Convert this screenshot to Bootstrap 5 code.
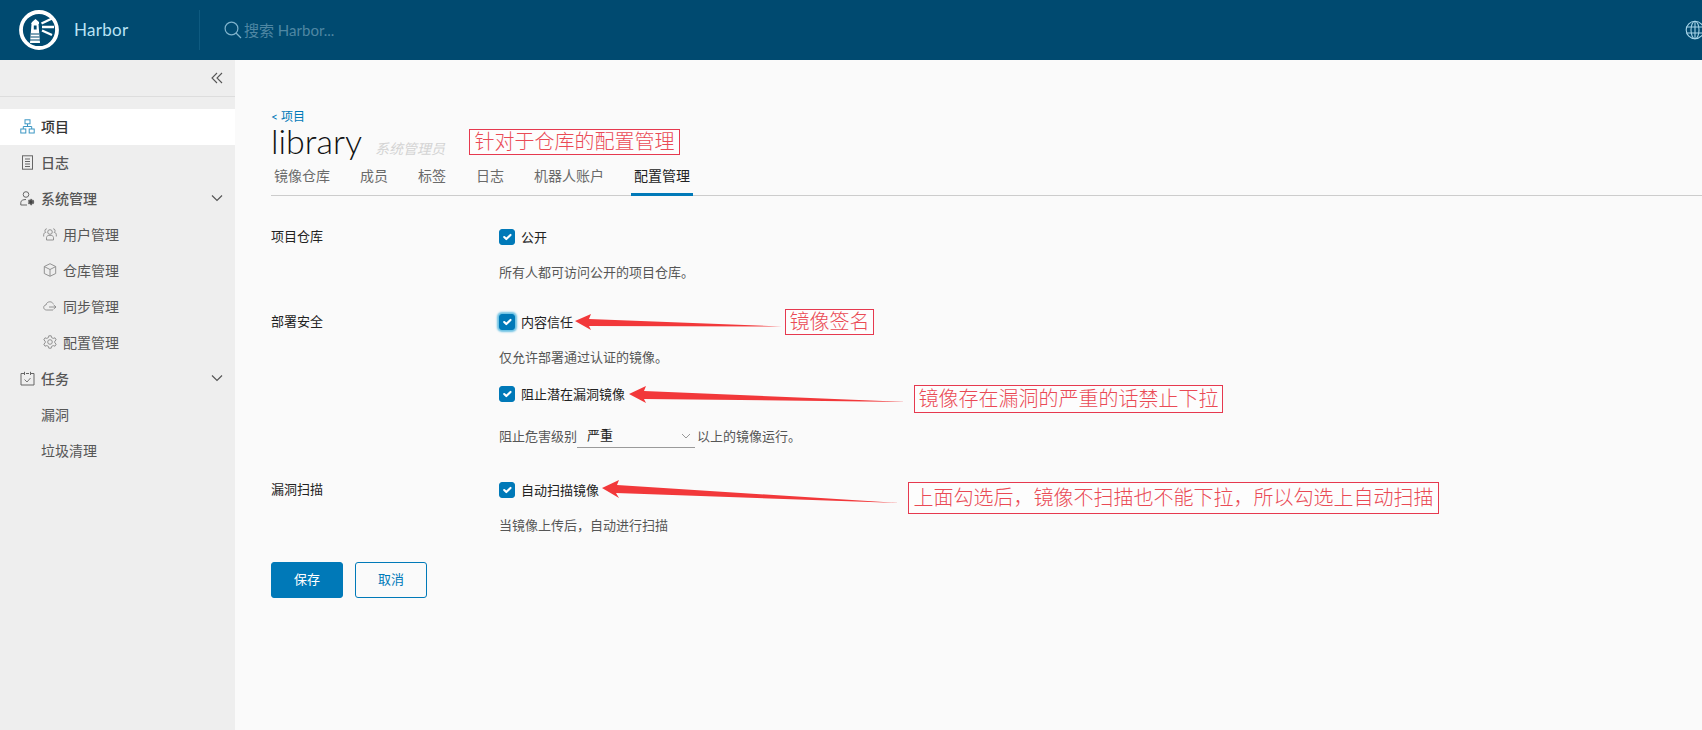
<!DOCTYPE html>
<html lang="zh-CN">
<head>
<meta charset="utf-8">
<title>Harbor</title>
<link href="https://cdn.jsdelivr.net/npm/bootstrap@5.3.0/dist/css/bootstrap.min.css" rel="stylesheet">
<style>
html,body{height:730px;overflow:hidden}
body{font-family:"Lato","Noto Sans CJK SC",sans-serif;font-size:14px;background:#fafafa;color:#222;position:relative}
.hb-top{height:60px;background:#004a70;color:#b9e3f5}
.hb-logo{margin-left:19px;width:40px;height:40px}
.hb-name{margin-left:15px;font-size:17px;letter-spacing:.3px;width:125px}
.hb-div{width:1px;height:40px;background:#0e5a80}
.hb-search{color:#4f87a3;font-size:15px;margin-left:2px}
.hb-mag{margin-left:24px}
.hb-glob{position:absolute;right:-3px;top:20px}
.hb-body{height:670px}
.hb-side{width:235px;background:#eee;color:#565656;flex:none}
.hb-coll{height:37px;border-bottom:1px solid #ddd;margin-bottom:12px;padding-right:12px}
.hb-item{height:36px;padding:0 12px 2px 20px;color:#565656;font-weight:500}
.hb-item.hb-on{background:#fff;color:#333}
.hb-sub{padding-left:43px;font-weight:400}
.hb-plain{padding-left:41px;font-weight:400}
.hb-ico{width:15px;margin-right:6px;flex:none}
.hb-sub .hb-ico{width:14px;margin-right:6px}
.hb-main{padding:48px 0 0 36px;min-width:0}
.hb-crumb{font-size:12px;line-height:18px;color:#0079b8}
.hb-crumb:hover{color:#0079b8}
.hb-title{font-size:34px;line-height:29px;font-weight:300;color:#111;margin:0;height:35px}
.hb-role{font-size:14px;font-style:italic;color:#d4d4d4;margin-left:13px;font-weight:400}
.hb-tabs{border-bottom:1px solid #ccc;height:35px}
.hb-tabs .nav-link{padding:0 3px;margin-right:24px;height:35px;line-height:30px;color:#6a6a6a;font-size:14px;border-bottom:3px solid transparent}
.hb-tabs .nav-link.active{color:#222;border-bottom-color:#0079b8}
.hb-form{padding-top:29px}
.hb-lbl{width:228px;flex:none;line-height:22px;color:#222;font-size:13px}
.hb-line{height:24px;line-height:24px;display:flex;align-items:center;font-size:13px}
.hb-help{color:#565656;font-size:13px;line-height:24px;margin-top:11px}
.hb-line .form-check-input{width:16px;height:16px;margin:0 6px 0 0;border-radius:3px;background-color:#0079b8;border-color:#0079b8;flex:none}
.hb-line .hb-focus{box-shadow:0 0 2px 2px #6bc1e3}
.hb-g2{margin-top:26px}.hb-g3{margin-top:30px}
.hb-m13{margin-top:13px}.hb-m17{margin-top:18px;color:#565656}
.hb-sel{width:118px;height:24px;margin:0 2px 0 0;padding:0 0 0 10px;border:0;border-bottom:1px solid #9a9a9a;border-radius:0;background-color:transparent;background-image:url("data:image/svg+xml,%3csvg xmlns='http://www.w3.org/2000/svg' viewBox='0 0 10 6'%3e%3cpath fill='none' stroke='%23999' d='M1 1l4 4 4-4'/%3e%3c/svg%3e");background-position:right 4px center;background-size:10px 6px;color:#222;font-size:13px;font-family:inherit}
.hb-btns{margin-top:25px}
.hb-btn{width:72px;height:36px;padding:0;font-size:13px;border-radius:3px;--bs-btn-bg:#0079b8;--bs-btn-border-color:#0079b8;--bs-btn-color:#fff}
.hb-btn2{margin-left:12px;--bs-btn-bg:transparent;--bs-btn-color:#0079b8}
.hb-note{position:absolute;border:1px solid #e6394f;color:#ea4a55;font-family:"Liberation Serif","Noto Sans CJK SC",serif;font-size:20px;font-weight:300;line-height:1;display:flex;align-items:center;justify-content:center;white-space:nowrap;background:#fdfdfd}
.hb-n1{left:469px;top:129px;width:211px;height:26px}
.hb-n2{left:785px;top:309px;width:89px;height:26px}
.hb-n3{left:914px;top:385px;width:309px;height:28px}
.hb-n4{left:908px;top:482px;width:531px;height:32px}
.hb-arrows{position:absolute;left:0;top:0;pointer-events:none}
</style>
</head>
<body>
<header class="hb-top d-flex align-items-center position-relative">
  <svg class="hb-logo" viewBox="0 0 40 40" fill="none" stroke="#fff">
    <circle cx="20" cy="20" r="18" stroke-width="3.8"/>
    <path d="M13 12 L16.500 9 L20 12 V14 H19.500 L21 33 H11 L12.500 14 H12 Z" fill="#fff" stroke="none"/>
    <rect x="14.800" y="15.500" width="2.800" height="4" fill="#004a70" stroke="none"/>
    <path d="M12 24H20M11.500 27H20.500M11 30H21" stroke="#004a70" stroke-width="1.100"/>
    <path d="M22.500 13.500L33 8.500M23 17H35M23 20.500L33 25" stroke-width="2.400"/>
  </svg>
  <div class="hb-name">Harbor</div>
  <div class="hb-div"></div>
  <svg class="hb-mag" width="18" height="18" viewBox="0 0 18 18" fill="none" stroke="#7fb3cc" stroke-width="1.200"><circle cx="7.500" cy="7.500" r="6.400"/><path d="M12 12l5 5"/></svg>
  <div class="hb-search">搜索 Harbor...</div>
  <svg class="hb-glob" width="20" height="20" viewBox="0 0 20 20" fill="none" stroke="#a6d4e8" stroke-width="1.100"><circle cx="10" cy="10" r="8.800"/><ellipse cx="10" cy="10" rx="4" ry="8.800"/><path d="M1.500 7H18.500M1.500 13H18.500M10 1.200V18.800"/></svg>
</header>
<div class="hb-body d-flex">
  <aside class="hb-side">
    <div class="hb-coll d-flex align-items-center justify-content-end">
      <svg width="12" height="12" viewBox="0 0 12 12" fill="none" stroke="#565656" stroke-width="1.100"><path d="M6 1L1 6l5 5M11 1L6 6l5 5"/></svg>
    </div>
    <nav class="nav flex-column">
      <a class="nav-link hb-item hb-on d-flex align-items-center"><svg class="hb-ico" height="15" viewBox="0 0 15 15" fill="none" stroke="#3c97c4" stroke-width="1"><rect x="5" y=".8" width="5" height="4"/><rect x=".8" y="10" width="5" height="4"/><rect x="9.200" y="10" width="5" height="4"/><path d="M7.500 5V7.500M3.300 10V7.500H11.700V10"/></svg>项目</a>
      <a class="nav-link hb-item d-flex align-items-center"><svg class="hb-ico" height="15" viewBox="0 0 15 15" fill="none" stroke="#666" stroke-width="1"><rect x="2.500" y=".8" width="10" height="13.400"/><path d="M5 4H10M5 6.500H10M5 9H10M5 11.500H10"/></svg>日志</a>
      <a class="nav-link hb-item d-flex align-items-center"><svg class="hb-ico" height="15" viewBox="0 0 15 15" fill="none" stroke="#666" stroke-width="1"><circle cx="6" cy="3.500" r="2.800"/><path d="M.8 14V11.500C.8 9.500 3 8.500 6 8.500M.8 14H7"/><circle cx="11" cy="11" r="2.300" fill="#444" stroke-width="1.800" stroke-dasharray="1.600 .7"/></svg>系统管理<svg class="ms-auto" width="12" height="8" viewBox="0 0 12 8" fill="none" stroke="#565656" stroke-width="1.200"><path d="M1 1.500l5 5 5-5"/></svg></a>
      <a class="nav-link hb-item hb-sub d-flex align-items-center"><svg class="hb-ico" height="14" viewBox="0 0 14 14" fill="none" stroke="#888" stroke-width=".9"><circle cx="7" cy="5" r="2.300"/><path d="M3.500 13V10.500C3.500 9 5.200 8.300 7 8.300S10.500 9 10.500 10.500V13H3.500Z"/><path d="M3.800 1.800A1.900 1.900 0 0 0 2.800 5.300C1.500 5.600 .7 6.500 .7 7.500V9.500M10.200 1.800A1.900 1.900 0 0 1 11.200 5.300C12.500 5.600 13.300 6.500 13.300 7.500V9.500"/></svg>用户管理</a>
      <a class="nav-link hb-item hb-sub d-flex align-items-center"><svg class="hb-ico" height="14" viewBox="0 0 14 14" fill="none" stroke="#888" stroke-width=".9"><path d="M7 .7L12.700 3.500V10.500L7 13.300 1.300 10.500V3.500Z"/><path d="M1.500 3.700L7 6.500l5.500-2.800M7 6.500V13"/></svg>仓库管理</a>
      <a class="nav-link hb-item hb-sub d-flex align-items-center"><svg class="hb-ico" height="14" viewBox="0 0 14 14" fill="none" stroke="#888" stroke-width=".9"><path d="M10 11H3.500C1.800 11 .7 9.800 .7 8.400S1.800 6 3 6C3.300 4 5 2.800 6.800 2.800 8.300 2.800 9.500 3.500 10.200 4.700"/><path d="M6 8H13M10.500 5.800L13 8l-2.500 2.200"/></svg>同步管理</a>
      <a class="nav-link hb-item hb-sub d-flex align-items-center"><svg class="hb-ico" height="14" viewBox="0 0 14 14" fill="none" stroke="#888" stroke-width=".9"><circle cx="7" cy="7" r="2.300"/><path d="M5.800 .8H8.200L8.600 2.600 10.200 3.400 12 2.800 13.200 4.900 11.800 6.100V7.900L13.200 9.100 12 11.200 10.200 10.600 8.600 11.400 8.200 13.200H5.800L5.400 11.400 3.800 10.600 2 11.200 .8 9.100 2.200 7.900V6.100L.8 4.900 2 2.800 3.800 3.400 5.400 2.600Z"/></svg>配置管理</a>
      <a class="nav-link hb-item d-flex align-items-center"><svg class="hb-ico" height="15" viewBox="0 0 15 15" fill="none" stroke="#666" stroke-width="1"><path d="M4 2.500H1V14H14V2.500H11M6 2.500H9M4.500 .8V4M10.500 .8V4"/><path d="M4.500 8.500L7 11l3.500-4" stroke="#777"/></svg>任务<svg class="ms-auto" width="12" height="8" viewBox="0 0 12 8" fill="none" stroke="#565656" stroke-width="1.200"><path d="M1 1.500l5 5 5-5"/></svg></a>
      <a class="nav-link hb-item hb-plain d-flex align-items-center">漏洞</a>
      <a class="nav-link hb-item hb-plain d-flex align-items-center">垃圾清理</a>
    </nav>
  </aside>
  <main class="hb-main flex-grow-1">
    <a class="hb-crumb d-block text-decoration-none">&lt; 项目</a>
    <h1 class="hb-title d-flex align-items-baseline">library<span class="hb-role">系统管理员</span></h1>
    <nav class="nav hb-tabs">
      <a class="nav-link">镜像仓库</a>
      <a class="nav-link">成员</a>
      <a class="nav-link">标签</a>
      <a class="nav-link">日志</a>
      <a class="nav-link">机器人账户</a>
      <a class="nav-link active">配置管理</a>
    </nav>
    <form class="hb-form">
      <div class="d-flex">
        <div class="hb-lbl">项目仓库</div>
        <div>
          <label class="hb-line"><input class="form-check-input" type="checkbox" checked>公开</label>
          <div class="hb-help">所有人都可访问公开的项目仓库。</div>
        </div>
      </div>
      <div class="d-flex hb-g2">
        <div class="hb-lbl">部署安全</div>
        <div>
          <label class="hb-line"><input class="form-check-input hb-focus" type="checkbox" checked>内容信任</label>
          <div class="hb-help">仅允许部署通过认证的镜像。</div>
          <label class="hb-line hb-m13"><input class="form-check-input" type="checkbox" checked>阻止潜在漏洞镜像</label>
          <div class="hb-line hb-m17">阻止危害级别<select class="form-select hb-sel"><option>严重</option></select>以上的镜像运行。</div>
        </div>
      </div>
      <div class="d-flex hb-g3">
        <div class="hb-lbl">漏洞扫描</div>
        <div>
          <label class="hb-line"><input class="form-check-input" type="checkbox" checked>自动扫描镜像</label>
          <div class="hb-help">当镜像上传后，自动进行扫描</div>
        </div>
      </div>
      <div class="hb-btns d-flex">
        <button type="button" class="btn hb-btn">保存</button>
        <button type="button" class="btn hb-btn hb-btn2">取消</button>
      </div>
    </form>
  </main>
</div>
<svg class="hb-arrows" width="1702" height="730">
  <g fill="#f2383a">
    <polygon points="575,321 591,314 589,319 782,326.500 589,326 591,330"/>
    <polygon points="629,394 646,386 644,391 907,402 644,399 646,403"/>
    <polygon points="602,488 619,480 617,485 899,503 616,493 619,498"/>
  </g>
</svg>
<div class="hb-note hb-n1">针对于仓库的配置管理</div>
<div class="hb-note hb-n2">镜像签名</div>
<div class="hb-note hb-n3">镜像存在漏洞的严重的话禁止下拉</div>
<div class="hb-note hb-n4">上面勾选后，镜像不扫描也不能下拉，所以勾选上自动扫描</div>
<script src="https://cdn.jsdelivr.net/npm/bootstrap@5.3.0/dist/js/bootstrap.bundle.min.js"></script>
</body>
</html>
